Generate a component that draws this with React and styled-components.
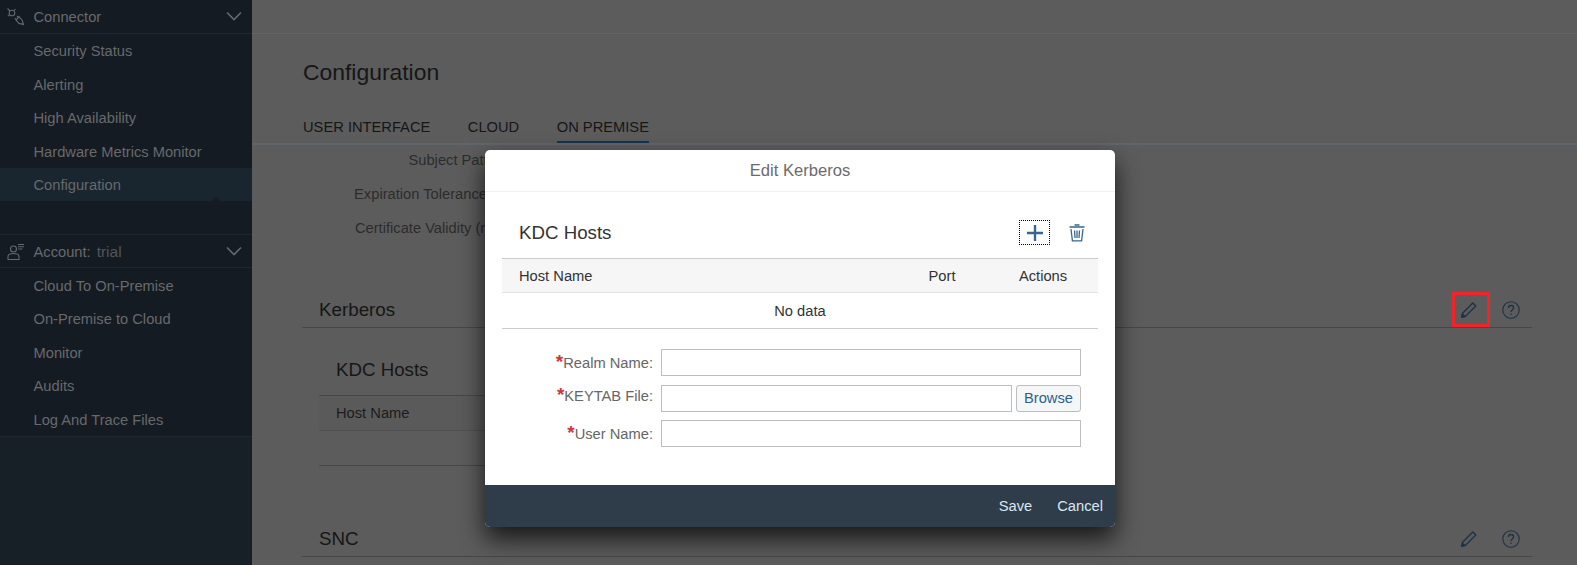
import styled, { createGlobalStyle } from "styled-components";

const GlobalStyle = createGlobalStyle`
  html, body {
    margin: 0;
    padding: 0;
    height: 100%;
    overflow: hidden;
    background: #5c5c5c;
    font-family: "Liberation Sans", Arial, sans-serif;
  }
  * {
    box-sizing: border-box;
  }
`;

const connectorItems = ["Security Status", "Alerting", "High Availability", "Hardware Metrics Monitor"];
const accountItems = ["Cloud To On-Premise", "On-Premise to Cloud", "Monitor", "Audits", "Log And Trace Files"];
const settings = ["Subject Pattern:", "Expiration Tolerance (h):", "Certificate Validity (min):"];

const Chevron = () => (
  <svg width="16" height="10" viewBox="0 0 16 10" fill="none" stroke="#636a72" strokeWidth="1.6">
    <path d="M1 1.5 L8 8.5 L15 1.5" />
  </svg>
);

const PlugIcon = () => (
  <svg width="18" height="18" viewBox="0 0 18 18" fill="none" stroke="#63696f" strokeWidth="1.1">
    <path d="M0.5 0.5 L3 3" />
    <circle cx="5" cy="5" r="2.8" />
    <path d="M2.2 7 L1 8.2 M7.2 2.4 L8.4 1.2" />
    <path d="M12 8.5 L15.4 12.5 L16.4 16.4 L12 15.4 L9 12 Z" />
    <path d="M10 8 L12.4 10.4 M7.8 10.2 L10 12.4" />
  </svg>
);

const UserIcon = () => (
  <svg width="18" height="18" viewBox="0 0 18 18" fill="none" stroke="#63696f" strokeWidth="1.1">
    <circle cx="6.5" cy="6" r="3" />
    <path d="M1 16.5 V13.5 C1 11.5 3 10.5 6.5 10.5 C10 10.5 12 11.5 12 13.5 V16.5 Z" />
    <path d="M11 1.5 H17 M11 3.8 H17 M11 6 H15.5" />
  </svg>
);

const PencilIcon = () => (
  <svg width="18" height="18" viewBox="0 0 18 18" fill="none" stroke="#1d3145" strokeWidth="1.3">
    <path d="M2.6 12.2 L12.8 2 L15.8 5 L5.6 15.2 L1.8 16.2 Z" />
    <path d="M2.4 13 L1.8 16.2 L5 15.6 Z" fill="#1d3145" />
  </svg>
);

const HelpIcon = () => (
  <svg width="18" height="18" viewBox="0 0 18 18" fill="none" stroke="#1d3145" strokeWidth="1.1">
    <circle cx="9" cy="9" r="8.2" />
    <path d="M6.4 7 C6.4 5.3 7.6 4.5 9 4.5 C10.6 4.5 11.7 5.5 11.7 6.8 C11.7 8.6 9 8.8 9 11" strokeWidth="1.3" />
    <path d="M9 12.4 V13.8" strokeWidth="1.4" />
  </svg>
);

const PlusIcon = () => (
  <svg width="16" height="16" viewBox="0 0 16 16" stroke="#38658f" strokeWidth="2.4">
    <path d="M8 0 V16 M0 8 H16" />
  </svg>
);

const TrashIcon = () => (
  <svg width="16" height="18" viewBox="0 0 16 18" fill="none" stroke="#38658f" strokeWidth="1.3">
    <path d="M5.5 1 H10.5 M0.5 3 H15.5" strokeWidth="1.6" />
    <path d="M2 5 L3.4 16.8 H12.6 L14 5" />
    <path d="M5.5 6.5 L6 14 M8 6.5 V14 M10.5 6.5 L10 14" />
  </svg>
);

const SectionHeader = ({ title, marked, gap }) => (
  <SectionHead $gap={gap}>
    <SectionTitle>{title}</SectionTitle>
    <EditSlot $marked={marked}>
      <PencilIcon />
    </EditSlot>
    <HelpSlot>
      <HelpIcon />
    </HelpSlot>
  </SectionHead>
);

const App = () => {
  return (
    <Page>
      <GlobalStyle />
      <Sidebar>
        <GroupHead>
          <GroupLabel>
            <IconCell>
              <PlugIcon />
            </IconCell>
            Connector
          </GroupLabel>
          <Chevron />
        </GroupHead>
        {connectorItems.map((item) => (
          <NavItem key={item}>{item}</NavItem>
        ))}
        <NavItem $active>Configuration</NavItem>
        <NavSpacer />
        <GroupHead $top>
          <GroupLabel>
            <IconCell>
              <UserIcon />
            </IconCell>
            Account:
            <AccountName>trial</AccountName>
          </GroupLabel>
          <Chevron />
        </GroupHead>
        <NavList>
          {accountItems.map((item) => (
            <NavItem key={item}>{item}</NavItem>
          ))}
        </NavList>
      </Sidebar>

      <Main>
        <TopBar />
        <PageHead>
          <PageTitle>Configuration</PageTitle>
          <Tabs>
            <Tab>USER INTERFACE</Tab>
            <Tab>CLOUD</Tab>
            <Tab $active>ON PREMISE</Tab>
          </Tabs>
        </PageHead>
        <Body>
          {settings.map((label) => (
            <SettingRow key={label}>{label}</SettingRow>
          ))}
          <SectionHeader title="Kerberos" marked gap={49} />
          <BackTitle>KDC Hosts</BackTitle>
          <BackTable>
            <BackHead>Host Name</BackHead>
            <BackRow />
          </BackTable>
          <SectionHeader title="SNC" gap={55} />
        </Body>
      </Main>

      <Modal>
        <ModalTitle>Edit Kerberos</ModalTitle>
        <ModalBody>
          <HostsBar>
            <HostsTitle>KDC Hosts</HostsTitle>
            <ToolButton $focused>
              <PlusIcon />
            </ToolButton>
            <ToolButton>
              <TrashIcon />
            </ToolButton>
          </HostsBar>
          <HostsHead>
            <span>Host Name</span>
            <HeadCell>Port</HeadCell>
            <HeadCell>Actions</HeadCell>
          </HostsHead>
          <EmptyRow>No data</EmptyRow>
          <Form>
            <Label>
              <Star>*</Star>Realm Name:
            </Label>
            <Input />
            <Label $raised>
              <Star>*</Star>KEYTAB File:
            </Label>
            <FileRow>
              <Input />
              <Browse>Browse</Browse>
            </FileRow>
            <Label>
              <Star>*</Star>User Name:
            </Label>
            <Input />
          </Form>
        </ModalBody>
        <ModalFooter>
          <FooterButton>Save</FooterButton>
          <FooterButton>Cancel</FooterButton>
        </ModalFooter>
      </Modal>
    </Page>
  );
};

export default App;

const Page = styled.div`
  position: relative;
  display: flex;
  width: 1577px;
  height: 565px;
  overflow: hidden;
  background: #5c5c5c;
`;

const Sidebar = styled.nav`
  width: 252px;
  flex-shrink: 0;
  background: #172027;
`;

const GroupHead = styled.div`
  display: flex;
  align-items: center;
  justify-content: space-between;
  height: ${(p) => (p.$top ? "34px" : "33.5px")};
  padding-right: 10px;
  background: #151b22;
  border-top: ${(p) => (p.$top ? "1px solid #1e2630" : "none")};
  border-bottom: 1px solid #1e2630;
`;

const GroupLabel = styled.div`
  display: flex;
  align-items: center;
  padding-top: 2px;
  font-size: 14.7px;
  color: #676a6e;
`;

const IconCell = styled.span`
  display: flex;
  justify-content: center;
  width: 33.5px;
  padding-right: 2px;
`;

const AccountName = styled.span`
  margin-left: 6px;
  font-size: 15.5px;
  color: #50555a;
`;

const NavList = styled.div`
  border-bottom: 1px solid #1e2630;
  background: #151b22;
`;

const NavItem = styled.div`
  position: relative;
  display: flex;
  align-items: center;
  height: 33.5px;
  padding: 1.5px 0 0 33.5px;
  font-size: 14.7px;
  color: #67696d;
  background: ${(p) => (p.$active ? "#19252f" : "#151b22")};

  ${(p) =>
    p.$active &&
    `
    &::after {
      content: "";
      position: absolute;
      right: 32px;
      bottom: 0;
      border: 4px solid transparent;
      border-top: 0;
      border-bottom-color: #151b22;
    }
  `}
`;

const NavSpacer = styled.div`
  height: 33px;
  background: #151b22;
`;

const Main = styled.main`
  flex: 1;
  min-width: 0;
`;

const TopBar = styled.div`
  height: 34px;
  border-bottom: 1px solid #646464;
`;

const PageHead = styled.header`
  height: 111px;
  padding: 23px 0 0 51px;
  border-bottom: 2px solid #61666b;
`;

const PageTitle = styled.h1`
  margin: 0;
  height: 30px;
  font-size: 22.9px;
  font-weight: 400;
  line-height: 30px;
  color: #161616;
`;

const Tabs = styled.div`
  display: flex;
  gap: 37.5px;
  margin-top: 24px;
`;

const Tab = styled.div`
  height: 32px;
  padding-top: 8px;
  font-size: 14.7px;
  line-height: 17px;
  color: #161616;
  border-bottom: ${(p) => (p.$active ? "2px solid #16344e" : "none")};
`;

const Body = styled.div`
  padding: 0 45px 0 50px;
`;

const SettingRow = styled.div`
  display: flex;
  align-items: center;
  justify-content: flex-end;
  width: 211px;
  height: 30px;
  margin-bottom: 4px;
  font-size: 14.7px;
  color: #2c2c2c;
  white-space: nowrap;
`;

const SectionHead = styled.div`
  display: flex;
  align-items: center;
  height: 36px;
  margin-top: ${(p) => p.$gap}px;
  padding: 0 2px 0 17px;
  border-bottom: 1px solid #474747;
`;

const SectionTitle = styled.h2`
  flex: 1;
  margin: 0;
  font-size: 18.8px;
  font-weight: 400;
  color: #161616;
`;

const EditSlot = styled.span`
  display: flex;
  align-items: center;
  justify-content: center;
  width: 38px;
  height: 35px;
  padding-right: 5px;
  border: 3px solid ${(p) => (p.$marked ? "#f1232b" : "transparent")};
`;

const HelpSlot = styled.span`
  display: flex;
  align-items: center;
  justify-content: center;
  width: 38px;
  margin-left: 2px;
`;

const BackTitle = styled.h3`
  height: 67px;
  margin: 0;
  padding-left: 34px;
  font-size: 18.7px;
  font-weight: 400;
  line-height: 83px;
  color: #161616;
`;

const BackTable = styled.div`
  width: 596px;
  margin-left: 17px;
  border-top: 1px solid #474747;
`;

const BackHead = styled.div`
  height: 35px;
  padding-left: 17px;
  font-size: 14.7px;
  line-height: 34px;
  color: #1c1c1c;
  background: #5a5a5a;
  border-bottom: 1px solid #515151;
`;

const BackRow = styled.div`
  height: 35px;
  border-bottom: 1px solid #474747;
`;

const Modal = styled.section`
  position: absolute;
  top: 150px;
  left: 485px;
  display: flex;
  flex-direction: column;
  width: 630px;
  height: 377px;
  overflow: hidden;
  background: #fff;
  border-radius: 5px;
  box-shadow: 0 12px 24px rgba(0, 0, 0, 0.75);
`;

const ModalTitle = styled.h2`
  height: 42px;
  margin: 0;
  font-size: 16.6px;
  font-weight: 400;
  line-height: 41px;
  text-align: center;
  color: #6b6b6b;
  border-bottom: 1px solid #f0f0f0;
`;

const ModalBody = styled.div`
  flex: 1;
  padding: 0 17px;
`;

const HostsBar = styled.div`
  display: flex;
  align-items: center;
  height: 66px;
  padding: 15px 0 0 17px;
`;

const HostsTitle = styled.h3`
  flex: 1;
  margin: 0;
  font-size: 18.7px;
  font-weight: 400;
  color: #333;
`;

const ToolButton = styled.button`
  display: flex;
  align-items: center;
  justify-content: center;
  width: 31px;
  height: 25px;
  padding: 0;
  margin-right: ${(p) => (p.$focused ? "11px" : "6px")};
  background: none;
  border: 1px dotted ${(p) => (p.$focused ? "#000" : "transparent")};
`;

const HostsHead = styled.div`
  display: grid;
  grid-template-columns: 1fr 92px 110px;
  align-items: center;
  height: 35px;
  padding-left: 17px;
  font-size: 14.7px;
  color: #333;
  background: #f6f6f6;
  border-top: 1px solid #ccc;
  border-bottom: 1px solid #e2e2e2;
`;

const HeadCell = styled.span`
  text-align: center;
`;

const EmptyRow = styled.div`
  height: 36px;
  padding-top: 1px;
  font-size: 14.7px;
  line-height: 35px;
  text-align: center;
  color: #333;
  border-bottom: 1px solid #ccc;
`;

const Form = styled.div`
  display: grid;
  grid-template-columns: 151px 420px;
  column-gap: 8px;
  row-gap: 8.5px;
  align-items: center;
  margin-top: 20px;
`;

const Label = styled.label`
  margin-top: ${(p) => (p.$raised ? "-4px" : "0")};
  font-size: 14.7px;
  text-align: right;
  color: #666;
  white-space: nowrap;
`;

const Star = styled.span`
  font-size: 19px;
  font-weight: 700;
  line-height: 14px;
  color: #c9383c;
`;

const Input = styled.input`
  flex: 1;
  min-width: 0;
  width: 100%;
  height: 27px;
  padding: 0 6px;
  background: #fff;
  border: 1px solid #bdbdbd;
  outline: none;
`;

const FileRow = styled.div`
  display: flex;
  gap: 4px;
`;

const Browse = styled.button`
  flex-shrink: 0;
  width: 65px;
  height: 27px;
  padding: 0;
  font-family: inherit;
  font-size: 14.7px;
  color: #2f5f8d;
  background: #f5f6f7;
  border: 1px solid #bdbdbd;
  border-radius: 3px;
`;

const ModalFooter = styled.footer`
  display: flex;
  align-items: center;
  justify-content: flex-end;
  gap: 25px;
  height: 42px;
  padding-right: 12px;
  background: #2f3c4a;
`;

const FooterButton = styled.button`
  padding: 0;
  font-family: inherit;
  font-size: 14.7px;
  color: #dbe6f0;
  background: none;
  border: none;
`;
